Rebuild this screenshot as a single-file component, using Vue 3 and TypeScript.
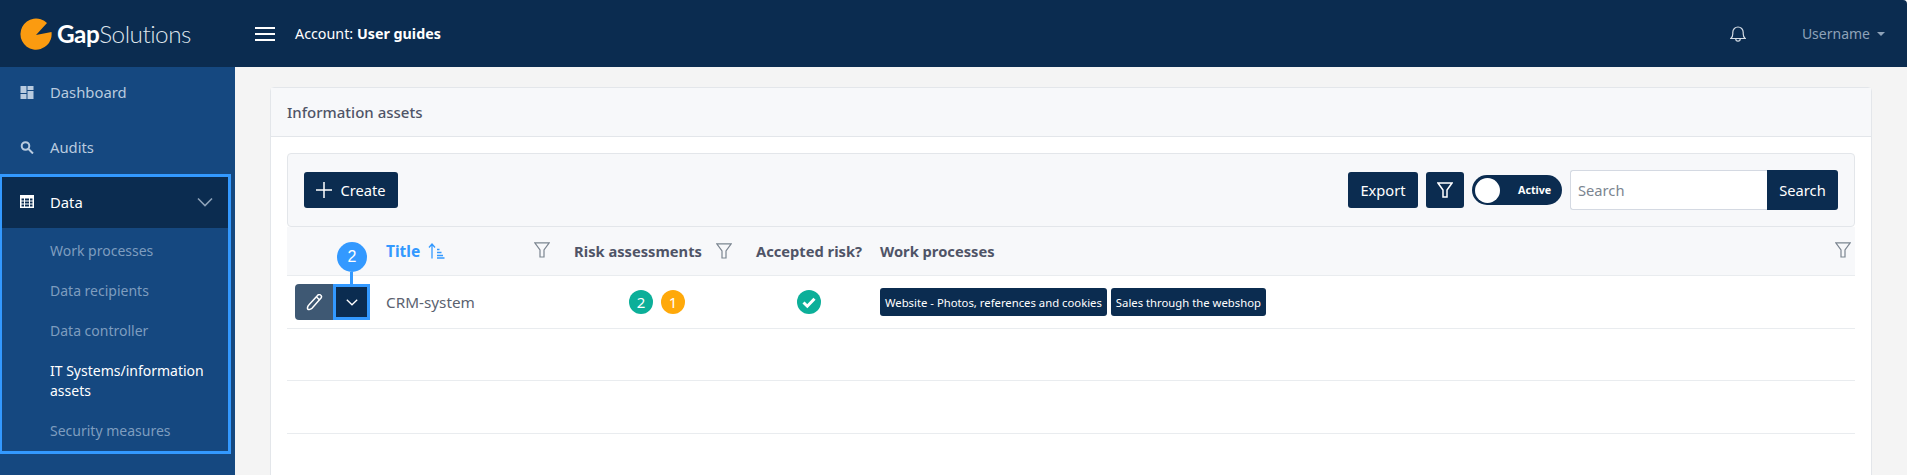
<script setup lang="ts">
const subItems = [
  { label: 'Work processes', active: false },
  { label: 'Data recipients', active: false },
  { label: 'Data controller', active: false },
  { label: 'IT Systems/information assets', active: true },
  { label: 'Security measures', active: false },
]
const processes = ['Website - Photos, references and cookies', 'Sales through the webshop']
</script>

<template>
  <div class="page">
    <header class="topbar">
      <div class="brand">
        <svg class="logo" width="32" height="32" viewBox="0 0 32 32">
          <path d="M27 5A15.600 15.600 0 1 0 31.500 14L16 17Z" fill="#fb9b10" />
        </svg>
        <span class="brand-name"><b>Gap</b>Solutions</span>
      </div>
      <svg class="burger" width="20" height="14" viewBox="0 0 20 14">
        <path d="M0 1H20M0 7H20M0 13H20" stroke="#fff" stroke-width="2" />
      </svg>
      <div class="account">Account: <b>User guides</b></div>
      <svg class="bell" width="16" height="16" viewBox="0 0 16 16" fill="none" stroke="#d5dde6" stroke-width="1.200">
        <path d="M.8 12.500h14.400c-1.300-.9-2-2-2-4.700V6.200a5.200 5.200 0 0 0-10.400 0v1.600c0 2.700-.7 3.800-2 4.700Z" />
        <path d="M5.800 13a2.200 2.200 0 0 0 4.400 0" />
      </svg>
      <div class="user">Username<span class="caret"></span></div>
    </header>
    <div class="body">
      <aside class="sidebar">
        <a class="nav-item">
          <svg class="nav-icon" width="13" height="13" viewBox="0 0 13 13" fill="#b9cbdf">
            <path d="M0 0H6V7H0ZM7 0H13V4H7ZM7 5H13V13H7ZM0 8H6V13H0Z" />
          </svg>
          Dashboard
        </a>
        <a class="nav-item">
          <svg class="nav-icon" width="13" height="13" viewBox="0 0 13 13" fill="none" stroke="#b9cbdf" stroke-width="2">
            <circle cx="5" cy="5" r="3.800" />
            <path d="M8 8l4.500 4.500" />
          </svg>
          Audits
        </a>
        <div class="group">
          <a class="nav-item nav-open">
            <svg class="nav-icon" width="14" height="13" viewBox="0 0 14 13" fill="#fff">
              <path d="M0 0H14V13H0ZM1.500 3.500V5.500H4V3.500ZM5 3.500V5.500H9V3.500ZM10 3.500V5.500H12.500V3.500ZM1.500 6.500V8.500H4V6.500ZM5 6.500V8.500H9V6.500ZM10 6.500V8.500H12.500V6.500ZM1.500 9.500V11.500H4V9.500ZM5 9.500V11.500H9V9.500ZM10 9.500V11.500H12.500V9.500Z" fill-rule="evenodd" />
            </svg>
            Data
            <svg class="chev" width="16" height="10" viewBox="0 0 16 10" fill="none" stroke="#8ea2b8" stroke-width="1.600">
              <path d="M1 1.500l7 7 7-7" />
            </svg>
          </a>
          <a v-for="item in subItems" :key="item.label" class="sub-item" :class="{ current: item.active }">{{ item.label }}</a>
        </div>
      </aside>
      <main class="content">
        <section class="card">
          <div class="card-head">Information assets</div>
          <div class="card-body">
            <div class="toolbar">
              <button class="btn create">
                <svg width="16" height="16" viewBox="0 0 16 16" stroke="#fff" stroke-width="1.500"><path d="M8 0V16M0 8H16" /></svg>
                Create
              </button>
              <div class="tools">
                <button class="btn export">Export</button>
                <button class="btn funnel">
                  <svg width="16" height="16" viewBox="0 0 16 16" fill="none" stroke="#fff" stroke-width="1.500"><path d="M1 1H15L10 8V15H6V8Z" /></svg>
                </button>
                <div class="toggle"><span class="knob"></span><span class="toggle-label">Active</span></div>
                <div class="search">
                  <input class="search-input" placeholder="Search" />
                  <button class="search-btn">Search</button>
                </div>
              </div>
            </div>
            <div class="table">
              <div class="row head">
                <div class="c-act"></div>
                <div class="c-title">
                  <span class="sorted">Title</span>
                  <svg class="sort" width="17" height="16" viewBox="0 0 17 16" fill="none" stroke="#3399ff" stroke-width="1.300">
                    <path d="M4 15.500V1M1 4.500L4 1l3 3.500" />
                    <path d="M9 6.500h2.500M9 9.500h4.500M9 12.500h6M9 15h7.500" />
                  </svg>
                  <svg class="filter" width="16" height="16" viewBox="0 0 16 16" fill="none" stroke="#7b8590" stroke-width="1.200"><path d="M.8.800H15.200L10 8V15H6V8Z" /></svg>
                </div>
                <div class="c-risk head-risk">
                  Risk assessments
                  <svg class="filter-inline" width="16" height="16" viewBox="0 0 16 16" fill="none" stroke="#7b8590" stroke-width="1.200"><path d="M.8.800H15.200L10 8V15H6V8Z" /></svg>
                </div>
                <div class="c-acc">Accepted risk?</div>
                <div class="c-work">
                  Work processes
                  <svg class="filter" width="16" height="16" viewBox="0 0 16 16" fill="none" stroke="#7b8590" stroke-width="1.200"><path d="M.8.800H15.200L10 8V15H6V8Z" /></svg>
                </div>
              </div>
              <div class="row data">
                <div class="c-act">
                  <div class="actions">
                    <button class="edit">
                      <svg width="17" height="17" viewBox="0 0 17 17" fill="none" stroke="#fff" stroke-width="1.500"><path d="M11.500 1.500a2.100 2.100 0 0 1 3.500 2.500L6 14.200c-1 1-3.300 1.800-4.200 1-.8-1 .1-3.300 1-4.200Z" /><path d="M10.500 3l3 2.800" /></svg>
                    </button>
                    <button class="more">
                      <svg width="12" height="7" viewBox="0 0 12 7" fill="none" stroke="#fff" stroke-width="1.300"><path d="M.8.800L6 5.800 11.200.8" /></svg>
                    </button>
                    <span class="callout">2</span>
                  </div>
                </div>
                <div class="c-title cell-text">CRM-system</div>
                <div class="c-risk risk-cell">
                  <span class="dot teal">2</span>
                  <span class="dot amber">1</span>
                </div>
                <div class="c-acc acc-cell">
                  <svg width="24" height="24" viewBox="0 0 24 24"><circle cx="12" cy="12" r="12" fill="#0caf99" /><path d="M6.500 12.500l3.800 3.700 7.200-7.500" fill="none" stroke="#fff" stroke-width="3" /></svg>
                </div>
                <div class="c-work tags">
                  <span v-for="p in processes" :key="p" class="tag">{{ p }}</span>
                </div>
              </div>
              <div class="row empty short"></div>
              <div class="row empty"></div>
            </div>
          </div>
        </section>
      </main>
    </div>
  </div>
</template>

<style>
html, body { margin: 0; background: #fff; overflow: hidden; }
</style>

<style scoped>
.page { width: 1907px; height: 475px; overflow: hidden; font-family: "Noto Sans", sans-serif; font-size: 14px; color: #4f5467; display: flex; flex-direction: column; }
.topbar { height: 67px; flex: none; background: #0b2c50; display: flex; align-items: center; color: #fff; border-top-right-radius: 4px; }
.brand { width: 235px; flex: none; display: flex; align-items: center; padding-left: 20px; box-sizing: border-box; }
.logo { margin-right: 5px; }
.brand-name { font-family: "Lato", sans-serif; font-size: 24.300px; font-weight: 300; letter-spacing: -.5px; color: #dfe5ec; }
.brand-name b { font-weight: 700; color: #fff; }
.burger { margin: 0 20px; }
.account { font-size: 14.300px; flex: 1; }
.bell { margin-right: 56px; }
.user { color: #8ea2b8; font-size: 14px; margin-right: 22px; display: flex; align-items: center; }
.caret { border: 4px solid transparent; border-top-color: #8ea2b8; border-bottom: 0; margin-left: 7px; }
.body { flex: 1; display: flex; min-height: 0; }
.sidebar { width: 235px; flex: none; background: #154880; box-sizing: border-box; }
.nav-item { height: 55px; padding: 0 0 5px 20px; display: flex; align-items: center; color: #b9cbdf; font-size: 14.800px; box-sizing: border-box; position: relative; }
.nav-icon { width: 14px; margin-right: 16px; flex: none; }
.group { width: 231px; height: 280px; box-sizing: border-box; border: 3px solid #3399ff; border-left-width: 2px; margin-top: -3px; }
.nav-open { height: 51px; background: #0b2c50; color: #fff; padding: 0 0 2px 18px; margin-bottom: 3px; }
.chev { position: absolute; right: 15px; top: 20px; }
.sub-item { display: block; padding: 10px 10px 10px 48px; line-height: 20px; color: #7e9dbf; font-size: 14px; }
.sub-item.current { color: #fff; }
.content { flex: 1; background: #f4f4f4; padding: 20px 35px 0; min-width: 0; }
.card { background: #fff; border: 1px solid #e3e6ea; border-radius: 4px; height: 420px; box-sizing: border-box; }
.card-head { height: 49px; background: #f7f8fa; border-bottom: 1px solid #e3e6ea; display: flex; align-items: center; padding-left: 16px; font-weight: 500; font-size: 15px; box-sizing: border-box; }
.card-body { padding: 16px; }
.toolbar { height: 74px; box-sizing: border-box; background: #f7f8fa; border: 1px solid #e3e6ea; border-radius: 4px; display: flex; align-items: center; justify-content: space-between; padding: 0 16px; }
.btn { background: #0b2c50; border: 0; color: #fff; border-radius: 3px; font: inherit; font-size: 14.700px; height: 36px; display: inline-flex; align-items: center; justify-content: center; padding: 0; }
.create { width: 94px; gap: 8px; }
.tools { display: flex; align-items: center; gap: 8px; }
.export { width: 70px; }
.funnel { width: 38px; }
.toggle { width: 90px; height: 30px; border-radius: 15px; background: #0b2c50; display: flex; align-items: center; }
.knob { width: 25px; height: 25px; border-radius: 50%; background: #fff; margin-left: 3px; flex: none; }
.toggle-label { color: #fff; font-size: 10.700px; font-weight: 700; margin-left: 18px; }
.search { display: flex; height: 40px; }
.search-input { width: 197px; height: 40px; box-sizing: border-box; border: 1px solid #d4d9e2; border-right: 0; border-radius: 3px 0 0 3px; padding: 0 7px; font: inherit; font-size: 14.700px; background: #fff; outline: none; }
.search-input::placeholder { color: #7b8590; }
.search-btn { width: 71px; height: 40px; padding: 0; background: #0b2c50; border: 0; color: #fff; font: inherit; font-size: 14.700px; border-radius: 0 3px 3px 0; }
.table { width: 100%; }
.row { display: flex; align-items: center; border-bottom: 1px solid #e9ecef; box-sizing: border-box; height: 53px; }
.row.short { height: 52px; }
.row.head { height: 49px; background: #f7f8fa; font-weight: 700; font-size: 14.700px; color: #4f5467; }
.c-act { width: 99px; flex: none; padding-left: 8px; box-sizing: border-box; }
.c-title { width: 176px; flex: none; position: relative; display: flex; align-items: center; }
.c-risk { width: 188px; flex: none; display: flex; align-items: center; justify-content: center; }
.head-risk { padding-right: 6px; box-sizing: border-box; }
.risk-cell { padding-left: 2px; box-sizing: border-box; }
.c-acc { width: 118px; flex: none; display: flex; justify-content: center; white-space: nowrap; }
.c-work { flex: 1; display: flex; align-items: center; position: relative; padding-left: 12px; }
.sorted { color: #3399ff; font-size: 15.500px; }
.sort { margin-left: 8px; }
.filter { position: absolute; right: 4px; top: 50%; margin-top: -9px; }
.c-title .filter { right: 12px; }
.filter-inline { margin-left: 14px; }
.actions { display: flex; height: 36px; position: relative; }
.edit { width: 38px; height: 36px; border: 0; background: #3e5873; border-radius: 4px 0 0 4px; display: flex; align-items: center; justify-content: center; padding: 0; }
.more { width: 37px; height: 36px; box-sizing: border-box; background: #0b2c50; border: 3px solid #3399ff; display: flex; align-items: center; justify-content: center; padding: 0; }
.callout { position: absolute; left: 42px; top: -42px; width: 30px; height: 30px; border-radius: 50%; background: #3399ff; color: #fff; font-size: 16px; display: flex; align-items: center; justify-content: center; font-family: "Liberation Sans", sans-serif; }
.callout::after { content: ""; position: absolute; left: 13px; top: 30px; width: 3px; height: 12px; background: #3399ff; }
.cell-text { font-size: 15.300px; color: #5b6270; }
.risk-cell { gap: 8px; }
.dot { width: 24px; height: 24px; border-radius: 50%; color: #fff; font-size: 15px; display: flex; align-items: center; justify-content: center; }
.teal { background: #0caf99; }
.amber { background: #ffa90a; }
.tags { gap: 4px; }
.tag { background: #0b2c50; color: #fff; font-size: 11.300px; height: 28px; display: flex; align-items: center; padding: 0 5px; border-radius: 3px; white-space: nowrap; }
</style>
